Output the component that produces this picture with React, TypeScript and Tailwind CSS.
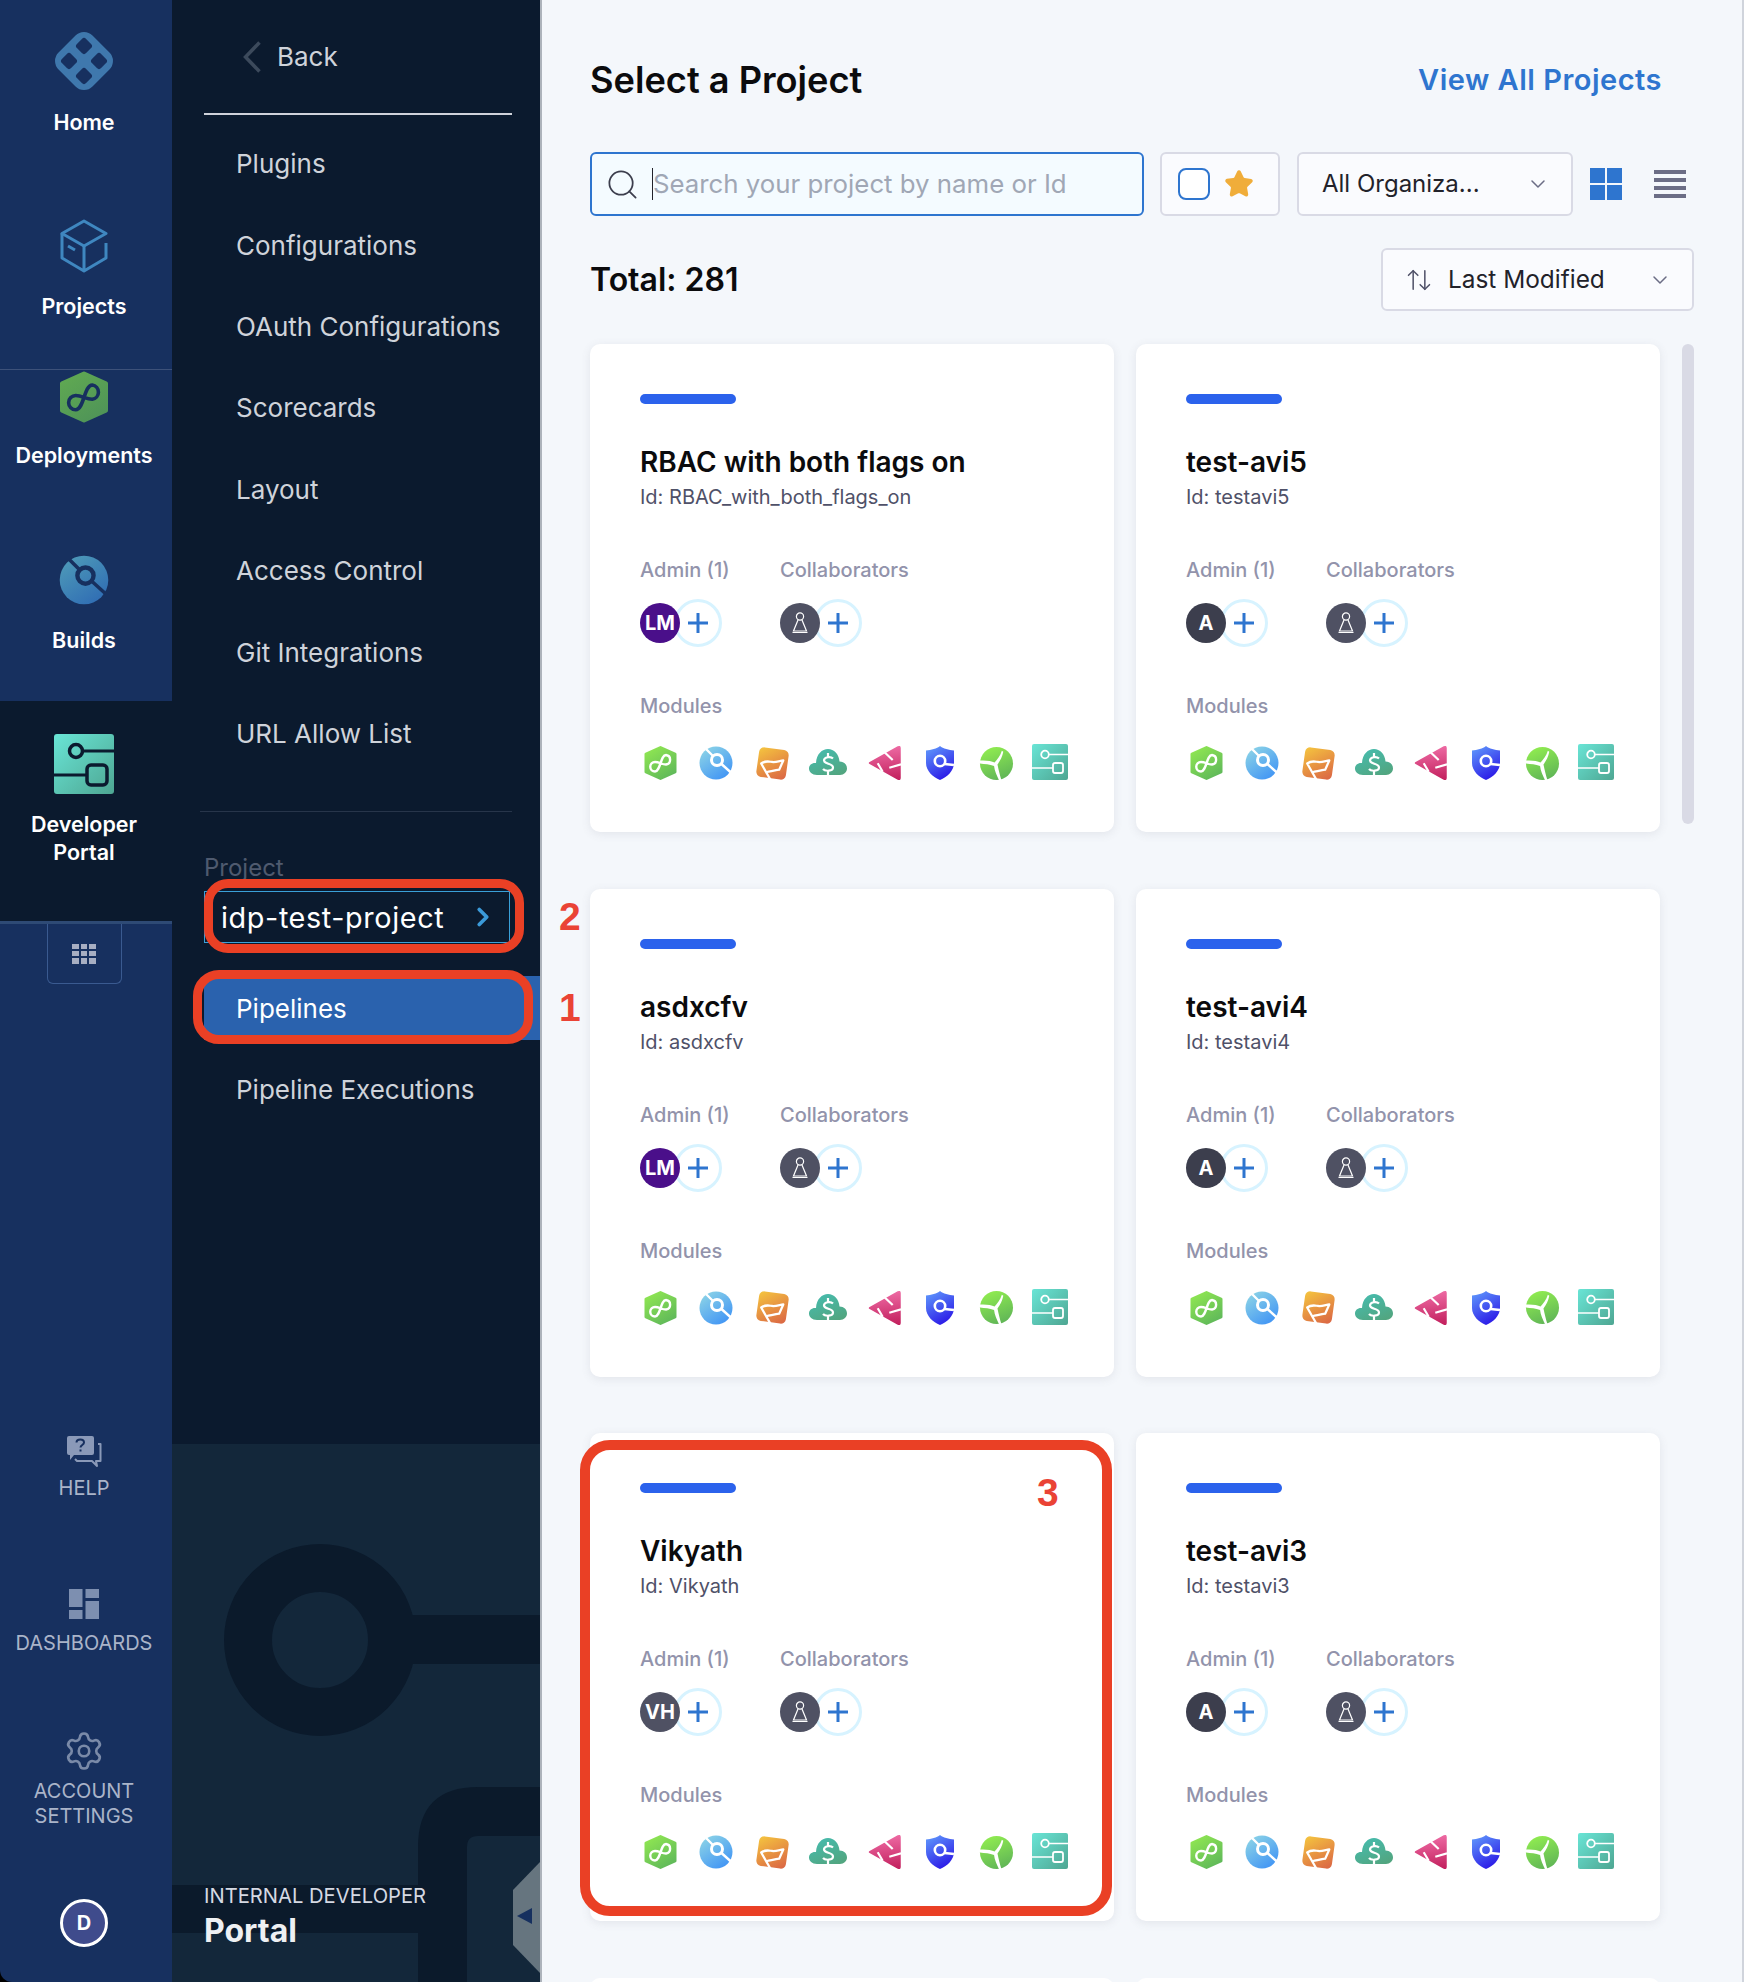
import { ChevronDown, ChevronRight, ArrowUpDown, Search, Settings, Star } from "lucide-react";

type IconProps = { className?: string };

const GradientDefs = () => (
  <svg width="0" height="0" className="absolute">
    <defs>
      <linearGradient id="gHex" x1="0.2" y1="0" x2="0.8" y2="1">
        <stop offset="0" stopColor="#8ee552" />
        <stop offset="1" stopColor="#5fb85a" />
      </linearGradient>
      <linearGradient id="gHexNav" x1="0.2" y1="0" x2="0.8" y2="1">
        <stop offset="0" stopColor="#5fa852" />
        <stop offset="1" stopColor="#4f9458" />
      </linearGradient>
      <linearGradient id="gCi" x1="0.1" y1="0" x2="0.8" y2="1">
        <stop offset="0" stopColor="#8fd6e6" />
        <stop offset="1" stopColor="#3f93f5" />
      </linearGradient>
      <linearGradient id="gCiNav" x1="0.1" y1="0" x2="0.8" y2="1">
        <stop offset="0" stopColor="#4f9cb8" />
        <stop offset="1" stopColor="#2f6cb4" />
      </linearGradient>
      <linearGradient id="gFlag" x1="0.1" y1="0" x2="0.8" y2="1">
        <stop offset="0" stopColor="#f4c23f" />
        <stop offset="1" stopColor="#dc6b44" />
      </linearGradient>
      <linearGradient id="gCloud" x1="0.2" y1="0" x2="0.8" y2="1">
        <stop offset="0" stopColor="#46bcae" />
        <stop offset="1" stopColor="#52a57f" />
      </linearGradient>
      <linearGradient id="gTri" x1="0.5" y1="0" x2="0.6" y2="1">
        <stop offset="0" stopColor="#ee6ba4" />
        <stop offset="1" stopColor="#c42360" />
      </linearGradient>
      <linearGradient id="gShield" x1="0.2" y1="0" x2="0.7" y2="1">
        <stop offset="0" stopColor="#5d94fb" />
        <stop offset="1" stopColor="#2a15e6" />
      </linearGradient>
      <linearGradient id="gTurbine" x1="0.3" y1="0" x2="0.7" y2="1">
        <stop offset="0" stopColor="#90ec50" />
        <stop offset="1" stopColor="#5fb457" />
      </linearGradient>
      <linearGradient id="gIdp" x1="0" y1="0" x2="1" y2="1">
        <stop offset="0" stopColor="#69e5d6" />
        <stop offset="1" stopColor="#4ea692" />
      </linearGradient>
    </defs>
  </svg>
);

const HexIcon = ({ className, fill = "url(#gHex)", line = "#fff" }: IconProps & { fill?: string; line?: string }) => (
  <svg viewBox="1.5 1 33 36" className={className}>
    <path d="M18 3.5 L32.5 10 V28 L18 34.5 L3.5 28 V10 Z" fill={fill} stroke={fill} strokeWidth="3" strokeLinejoin="round" />
    <path d="M12.5 18 C17 18 19 20.5 23.5 20.5 A4.8 4.8 0 0 0 23.5 11 C18 11 18 27.5 12.5 27.5 A4.75 4.75 0 0 1 12.5 18Z" fill="none" stroke={line} strokeWidth="2.4" />
  </svg>
);

const CiIcon = ({ className, fill = "url(#gCi)", line = "#fff" }: IconProps & { fill?: string; line?: string }) => (
  <svg viewBox="1 1 34 34" className={className}>
    <circle cx="18" cy="18" r="16.5" fill={fill} />
    <circle cx="19" cy="15" r="5.5" fill="none" stroke={line} strokeWidth="3" />
    <path d="M8 4 L15 11 M23.5 19 L34 28.5" stroke={line} strokeWidth="2.4" />
  </svg>
);

const FlagIcon = ({ className }: IconProps) => (
  <svg viewBox="0 0 36 36" className={className}>
    <rect x="3.5" y="3.5" width="29" height="29" rx="5" fill="url(#gFlag)" transform="rotate(8 18 18)" />
    <path d="M17 35.5 L7 18 C11 15 14 16 17.5 16.5 C21 17 25 15.5 28.5 15 L24.5 24 C21 24.5 17 25.5 12 26.5" fill="none" stroke="#fff" strokeWidth="2.2" strokeLinejoin="round" />
  </svg>
);

const CloudIcon = ({ className }: IconProps) => (
  <svg viewBox="0 0 38 34" className={className}>
    <path d="M8 29 C3 29 0 26 0 22.5 C0 19 3 16.5 7 17 C7.5 8 13 3 19 3 C25 3 30 8 30.5 15.5 C35 15.5 38 18.5 38 22.5 C38 26 35 29 31 29 Z" fill="url(#gCloud)" />
    <path d="M24 12.5 C22 10.5 15 10.5 15 14.5 C15 18.5 24 17 24 21.5 C24 25.5 16 25.5 14 23 M19 7 V10.5 M19 25 V33" fill="none" stroke="#fff" strokeWidth="2.2" />
  </svg>
);

const TriangleIcon = ({ className }: IconProps) => (
  <svg viewBox="0 0 34 38" className={className}>
    <path d="M2.5 19 L31 3 Q33 2 33 4 V34 Q33 36 31 35 Z" fill="url(#gTri)" stroke="url(#gTri)" strokeWidth="1.5" strokeLinejoin="round" />
    <path d="M17 7.7 L25.7 16 M22.3 23.7 L34 20.3 M10.7 19.3 L15.7 27.7" stroke="#fff" strokeWidth="2.2" />
  </svg>
);

const ShieldIcon = ({ className }: IconProps) => (
  <svg viewBox="0 0 30 36" className={className}>
    <path d="M15 1 C18 3.5 24 5 29 5.5 V18 C29 26 22 32 15 35 C8 32 1 26 1 18 V5.5 C6 5 12 3.5 15 1Z" fill="url(#gShield)" />
    <circle cx="15" cy="16" r="5.2" fill="none" stroke="#fff" strokeWidth="2.6" />
    <path d="M19.5 19 L29 20" stroke="#fff" strokeWidth="2.4" />
  </svg>
);

const TurbineIcon = ({ className }: IconProps) => (
  <svg viewBox="0 0 36 36" className={className}>
    <circle cx="18" cy="18" r="17" fill="url(#gTurbine)" />
    <path d="M1 15 C7 14.5 13 15.5 16 17 C19 14 22 10 23.5 5 L25 6 C24 11 22 15 19 19 C20 24 21.5 30 23 35 L21 36 C18 30 16 25 15.5 20.5 C11 19 6 18.5 1 18Z" fill="#fff" />
  </svg>
);

const IdpIcon = ({ className }: IconProps) => (
  <svg viewBox="0 0 36 36" className={className}>
    <rect width="36" height="36" rx="2" fill="url(#gIdp)" />
    <circle cx="13" cy="10.5" r="3.8" fill="none" stroke="#fff" strokeWidth="1.8" />
    <path d="M17 10.5 H36 M0 24 H21" stroke="#fff" strokeWidth="1.6" />
    <rect x="21" y="19" width="10" height="10" rx="2" fill="none" stroke="#fff" strokeWidth="1.8" />
  </svg>
);

const IdpNavIcon = ({ className }: IconProps) => (
  <svg viewBox="0 0 60 60" className={className}>
    <rect width="60" height="60" rx="3" fill="url(#gIdp)" />
    <circle cx="22" cy="17" r="6.5" fill="none" stroke="#0b1a2e" strokeWidth="3.5" />
    <path d="M28 17 H60 M0 41 H33" stroke="#0b1a2e" strokeWidth="3" />
    <rect x="33" y="31" width="20" height="20" rx="4" fill="none" stroke="#0b1a2e" strokeWidth="3.5" />
  </svg>
);

const HomeLogo = ({ className }: IconProps) => (
  <svg viewBox="0 0 60 60" className={className}>
    <rect x="6" y="6" width="48" height="48" rx="12" transform="rotate(45 30 30)" fill="#3f78ad" />
    <g fill="#17305f">
      <rect x="23.5" y="8.5" width="13" height="13" rx="3" transform="rotate(45 30 15)" />
      <rect x="38.5" y="23.5" width="13" height="13" rx="3" transform="rotate(45 45 30)" />
      <rect x="23.5" y="38.5" width="13" height="13" rx="3" transform="rotate(45 30 45)" />
      <rect x="8.5" y="23.5" width="13" height="13" rx="3" transform="rotate(45 15 30)" />
    </g>
  </svg>
);

const CubeIcon = ({ className }: IconProps) => (
  <svg viewBox="0 0 48 54" className={className} fill="none" stroke="#3f87c0" strokeWidth="3" strokeLinejoin="round">
    <path d="M24 2 L46 14.5 L24 27 L2 14.5 Z" />
    <path d="M2 14.5 V39 L24 52 L46 39 V24 M24 27 V52" />
    <path d="M8 27 L15 31" />
  </svg>
);

const HelpIcon = ({ className }: IconProps) => (
  <svg viewBox="0 0 36 32" className={className}>
    <path d="M3 0 H26 Q28 0 28 2 V17 Q28 19 26 19 H8 L4 24 V19 H3 Q1 19 1 17 V2 Q1 0 3 0Z" fill="#8a99b8" />
    <path d="M10.5 6.5 C10.5 2.5 18 2.5 18 6.5 C18 9 14.5 9 14.5 11.5 M14.5 13.5 V15.5" fill="none" stroke="#17305f" strokeWidth="2" />
    <path d="M32 8 H34.5 V25 H30 L31 30 L26 25 H11 L9 23" fill="none" stroke="#8a99b8" strokeWidth="2" strokeLinejoin="round" />
  </svg>
);

const DashIcon = ({ className }: IconProps) => (
  <svg viewBox="0 0 30 30" className={className} fill="#7d8fb0">
    <rect x="0" y="0" width="13.5" height="18" />
    <rect x="16.5" y="0" width="13.5" height="9" />
    <rect x="0" y="21" width="13.5" height="9" />
    <rect x="16.5" y="12" width="13.5" height="18" />
  </svg>
);

const PersonIcon = ({ className }: IconProps) => (
  <svg viewBox="0 0 20 24" className={className} fill="none" stroke="#fff" strokeWidth="1.2">
    <circle cx="10" cy="5.5" r="3.6" />
    <path d="M8 9 L3.5 20 H16.5 L12 9 M2.5 21.5 H17.5" />
  </svg>
);

const PlusBubble = ({ avatar, color, text }: { avatar?: boolean; color: string; text?: string }) => (
  <div className="relative h-[48px] w-[82px]">
    <div className="absolute left-[34px] top-0 flex h-[48px] w-[48px] items-center justify-center rounded-full border-[3px] border-[#d7f3ff] bg-white">
      <svg viewBox="0 0 20 20" className="h-[20px] w-[20px]" stroke="#2e75cf" strokeWidth="3">
        <path d="M10 0 V20 M0 10 H20" />
      </svg>
    </div>
    <div className={`absolute left-0 top-[4px] flex h-[40px] w-[40px] items-center justify-center rounded-full text-[20px] font-bold leading-none text-white ${color}`}>
      {avatar ? <PersonIcon className="h-[24px] w-[20px]" /> : text}
    </div>
  </div>
);

const ModuleRow = () => (
  <div className="-ml-[8px] flex h-[40px] items-center">
    <div className="flex w-[56px] justify-center"><HexIcon className="h-[36px] w-[33px]" /></div>
    <div className="flex w-[56px] justify-center"><CiIcon className="h-[34px] w-[34px]" /></div>
    <div className="flex w-[56px] justify-center"><FlagIcon className="h-[37px] w-[37px]" /></div>
    <div className="flex w-[56px] justify-center"><CloudIcon className="h-[34px] w-[38px]" /></div>
    <div className="flex w-[56px] justify-center"><TriangleIcon className="h-[38px] w-[34px]" /></div>
    <div className="flex w-[56px] justify-center"><ShieldIcon className="h-[36px] w-[30px]" /></div>
    <div className="flex w-[56px] justify-center"><TurbineIcon className="h-[35px] w-[35px]" /></div>
    <div className="-ml-[2px] -mt-[2px] flex w-[56px] justify-center"><IdpIcon className="h-[36px] w-[36px]" /></div>
  </div>
);

type Project = { name: string; id: string; initials: string; color: string; highlight?: boolean };

const projects: Project[] = [
  { name: "RBAC with both flags on", id: "RBAC_with_both_flags_on", initials: "LM", color: "bg-[#4a0f8a]" },
  { name: "test-avi5", id: "testavi5", initials: "A", color: "bg-[#3c3e4d]" },
  { name: "asdxcfv", id: "asdxcfv", initials: "LM", color: "bg-[#4a0f8a]" },
  { name: "test-avi4", id: "testavi4", initials: "A", color: "bg-[#3c3e4d]" },
  { name: "Vikyath", id: "Vikyath", initials: "VH", color: "bg-[#4f5163]", highlight: true },
  { name: "test-avi3", id: "testavi3", initials: "A", color: "bg-[#3c3e4d]" },
];

const ProjectCard = ({ project }: { project: Project }) => (
  <div className="relative h-[488px] rounded-[10px] bg-white pl-[50px] pt-[50px] shadow-[0_2px_10px_rgba(96,97,112,0.12)]">
    <div className="h-[10px] w-[96px] rounded-full bg-[#2b62ec]" />
    <div className="mt-[40px] text-[28px] font-semibold leading-[36px] text-[#0b0b0d]">{project.name}</div>
    <div className="mt-[2px] text-[20px] leading-[30px] text-[#4f5168]">Id: {project.id}</div>
    <div className="mt-[43px] flex">
      <div className="w-[140px]">
        <div className="text-[20px] font-medium leading-[30px] text-[#9293ab]">Admin (1)</div>
        <div className="mt-[14px]"><PlusBubble color={project.color} text={project.initials} /></div>
      </div>
      <div>
        <div className="text-[20px] font-medium leading-[30px] text-[#9293ab]">Collaborators</div>
        <div className="mt-[14px]"><PlusBubble avatar color="bg-[#4f5163]" /></div>
      </div>
    </div>
    <div className="mt-[44px] text-[20px] font-medium leading-[30px] text-[#9293ab]">Modules</div>
    <div className="mt-[22px]"><ModuleRow /></div>
    {project.highlight && (
      <>
        <div className="pointer-events-none absolute -left-[10px] bottom-[5px] right-[2px] top-[7px] rounded-[30px] border-[10px] border-[#ea4025]" />
        <div className="absolute left-[447px] top-[38px] [font-family:'Liberation_Sans',sans-serif] text-[39px] font-bold leading-[44px] text-[#ea4335]">3</div>
      </>
    )}
  </div>
);

const Rail = () => (
  <aside className="flex h-full w-[172px] shrink-0 flex-col overflow-hidden rounded-bl-[12px] bg-[#17305f] text-center text-[21.5px] font-semibold leading-[28px] text-white">
    <div className="h-[370px] border-b border-[#3d5179] pr-[4px] pt-[31px]">
      <HomeLogo className="mx-auto h-[60px] w-[60px]" />
      <div className="mt-[17px]">Home</div>
      <CubeIcon className="mx-auto mt-[83px] h-[54px] w-[48px]" />
      <div className="mt-[19px]">Projects</div>
    </div>
    <div className="pr-[4px]">
      <HexIcon className="mx-auto h-[54px] w-[50px]" fill="url(#gHexNav)" line="#17305f" />
      <div className="mt-[17px]">Deployments</div>
      <CiIcon className="mx-auto mt-[86px] h-[50px] w-[50px]" fill="url(#gCiNav)" line="#17305f" />
      <div className="mt-[21px]">Builds</div>
    </div>
    <div className="mt-[47px] h-[223px] shrink-0 border-b-[3px] border-[#2e4a75] bg-[#0b1a2e] pr-[4px] pt-[33px]">
      <IdpNavIcon className="mx-auto h-[60px] w-[60px]" />
      <div className="mt-[16px]">Developer</div>
      <div>Portal</div>
    </div>
    <div className="pr-[4px]">
      <div className="mx-auto flex h-[60px] w-[75px] shrink-0 items-center justify-center rounded-b-[6px] border border-t-0 border-[#3a5a90]">
        <div className="grid h-[20px] w-[24px] grid-cols-3 gap-[2px]">
          {Array.from({ length: 9 }).map((_, i) => (
            <div key={i} className="bg-[#a7aec2]" />
          ))}
        </div>
      </div>
    </div>
    <div className="mt-auto flex flex-col items-center pb-[35px] pr-[4px] text-[20px] font-normal leading-[25px] text-[#aab4c9]">
      <HelpIcon className="h-[32px] w-[36px]" />
      <div className="mt-[8px]">HELP</div>
      <DashIcon className="mt-[88px] h-[30px] w-[30px]" />
      <div className="mt-[12px]">DASHBOARDS</div>
      <Settings className="mt-[74px] h-[42px] w-[42px] text-[#7a8aa8]" strokeWidth={1.5} />
      <div className="mt-[7px]">ACCOUNT</div>
      <div>SETTINGS</div>
      <div className="mt-[70px] flex h-[48px] w-[48px] items-center justify-center rounded-full border-[3px] border-white bg-[#3f4b8c] text-[20px] font-bold text-white">D</div>
    </div>
  </aside>
);

const menuTop = ["Plugins", "Configurations", "OAuth Configurations", "Scorecards", "Layout", "Access Control", "Git Integrations", "URL Allow List"];

const SidePanel = () => (
  <div className="relative flex h-full w-[368px] shrink-0 flex-col overflow-hidden bg-[#0b1a2e] text-[26px] text-[#cfd3da]">
    <svg viewBox="0 0 368 538" className="absolute bottom-0 left-0 h-[538px] w-[368px]">
      <rect width="368" height="538" fill="#13273a" />
      <circle cx="148" cy="196" r="72" fill="none" stroke="#0b1a2b" strokeWidth="48" />
      <rect x="210" y="171" width="158" height="49" fill="#0b1a2b" />
      <rect x="0" y="441" width="270" height="48" fill="#0b1a2b" />
      <path d="M246 538 V403 Q246 343 306 343 H368 V392 H306 Q295 392 295 403 V538 Z" fill="#0b1a2b" />
    </svg>
    <div className="relative flex h-[113px] shrink-0 items-center pl-[71px]">
      <svg viewBox="0 0 18 32" className="mr-[16px] h-[32px] w-[18px]" fill="none" stroke="#3c4a5c" strokeWidth="3.5">
        <path d="M16.5 1.5 L2.5 16 L16.5 30.5" />
      </svg>
      Back
    </div>
    <div className="relative ml-[32px] h-[2px] w-[308px] shrink-0 bg-[#cfd2da]" />
    <div className="relative mt-[8px] shrink-0 pl-[64px]">
      {menuTop.map((item) => (
        <div key={item} className="flex h-[81.4px] items-center">{item}</div>
      ))}
    </div>
    <div className="relative ml-[28px] mt-[37px] h-px w-[312px] shrink-0 bg-[#27354a]" />
    <div className="relative ml-[32px] mt-[40px] shrink-0 text-[24px] leading-[32px] text-[#4f5a6f]">Project</div>
    <div className="relative ml-[32px] mt-[7px] flex h-[52px] w-[306px] shrink-0 items-center justify-between border border-[#3aa0d8] pl-[16px] pr-[11px] text-[28.8px] tracking-[0.6px] text-white">
      idp-test-project
      <ChevronRight className="h-[30px] w-[30px] text-[#3b9ad9]" strokeWidth={3} />
      <div className="absolute -left-[1px] -top-[13px] h-[74px] w-[320px] rounded-[24px] border-[9px] border-[#ea4025]" />
    </div>
    <div className="relative ml-[32px] mt-[33px] flex h-[64px] shrink-0 items-center bg-[#2a62ae] pl-[32px] text-white">
      Pipelines
      <div className="absolute -left-[11px] -top-[6px] h-[74px] w-[340px] rounded-[26px] border-[9px] border-[#ea4025]" />
    </div>
    <div className="relative mt-[9px] flex h-[81.4px] shrink-0 items-center pl-[64px]">Pipeline Executions</div>
    <div className="relative mt-auto pb-[31px] pl-[32px]">
      <div className="text-[20.2px] leading-[30px] text-[#d5d9e3]">INTERNAL DEVELOPER</div>
      <div className="text-[32px] font-bold leading-[40px] text-[#eef0f3]">Portal</div>
    </div>
    <svg viewBox="0 0 27 111" className="absolute bottom-[9px] right-0 h-[111px] w-[27px]">
      <path d="M27 0 L0 28 V83 L27 111 Z" fill="#66757f" />
      <path d="M4 54 L19 46 V62 Z" fill="#16305f" />
    </svg>
  </div>
);

const MainPanel = () => (
  <main className="relative h-full min-w-0 flex-1 overflow-hidden border-l-2 border-r-2 border-l-[#adb3bb] border-r-[#d0d4dc] bg-[#f4f7fb] pl-[48px]">
    <div className="flex h-[152px] items-start justify-between pr-[80px] pt-[56px]">
      <h1 className="text-[36.2px] font-semibold leading-[48px] text-[#0b0b0d]">Select a Project</h1>
      <a className="text-[29px] font-semibold leading-[48px] tracking-[0.5px] text-[#2e75cf]">View All Projects</a>
    </div>
    <div className="flex h-[64px] items-center">
      <div className="flex h-[64px] w-[554px] items-center rounded-[6px] border-2 border-[#2e75cf] bg-[#f4fbff] pl-[13px]">
        <Search className="h-[35px] w-[35px] text-[#3c3e4d]" strokeWidth={1.2} />
        <div className="ml-[12px] h-[32px] w-px bg-[#22222a]" />
        <div className="text-[25.8px] text-[#a0a7b5]">Search your project by name or Id</div>
      </div>
      <div className="ml-[16px] flex h-[64px] w-[120px] items-center rounded-[6px] border-2 border-[#d9dae5] bg-[#fafbfe] pl-[16px]">
        <div className="h-[32px] w-[32px] rounded-[8px] border-2 border-[#2e75cf] bg-white" />
        <Star className="ml-[14px] h-[30px] w-[30px] fill-[#f0ad3a] text-[#f0ad3a]" />
      </div>
      <div className="ml-[17px] flex h-[64px] w-[276px] items-center justify-between rounded-[6px] border-2 border-[#d9dae5] bg-[#fafbfe] pl-[23px] pr-[21px] text-[24px] text-[#22222a]">
        All Organiza...
        <ChevronDown className="h-[24px] w-[24px] text-[#6b6d85]" strokeWidth={1.5} />
      </div>
      <div className="ml-[17px] grid h-[32px] w-[32px] grid-cols-2 gap-[2px]">
        <div className="bg-[#2e75cf]" />
        <div className="bg-[#2e75cf]" />
        <div className="bg-[#2e75cf]" />
        <div className="bg-[#2e75cf]" />
      </div>
      <div className="ml-[32px] flex h-[28px] w-[32px] flex-col justify-between">
        <div className="h-[4px] bg-[#6b6d85]" />
        <div className="h-[4px] bg-[#6b6d85]" />
        <div className="h-[4px] bg-[#6b6d85]" />
        <div className="h-[4px] bg-[#6b6d85]" />
      </div>
    </div>
    <div className="mt-[32px] flex h-[63px] items-center justify-between pr-[48px]">
      <div className="text-[32px] font-semibold text-[#0b0b0d]">Total: 281</div>
      <div className="flex h-[63px] w-[313px] items-center rounded-[6px] border-2 border-[#d9dae5] bg-[#fafbfe] pl-[22px] pr-[20px] text-[24.4px] text-[#22222a]">
        <ArrowUpDown className="h-[28px] w-[28px] text-[#4f5168]" strokeWidth={1.3} />
        <span className="ml-[15px] flex-1">Last Modified</span>
        <ChevronDown className="h-[24px] w-[24px] text-[#6b6d85]" strokeWidth={1.5} />
      </div>
    </div>
    <div className="mt-[33px] grid grid-cols-[524px_524px] gap-x-[22px] gap-y-[56.5px]">
      {projects.map((p) => (
        <ProjectCard key={p.name} project={p} />
      ))}
      <div className="h-[488px] rounded-[10px] bg-white" />
      <div className="h-[488px] rounded-[10px] bg-white" />
    </div>
    <div className="absolute left-[1140px] top-[344px] h-[480px] w-[12px] rounded-full bg-[#d9dae5]" />
    <div className="absolute left-[17px] top-[897px] [font-family:'Liberation_Sans',sans-serif] text-[39px] font-bold leading-[40px] text-[#ea4335]">2</div>
    <div className="absolute left-[17px] top-[988px] [font-family:'Liberation_Sans',sans-serif] text-[39px] font-bold leading-[40px] text-[#ea4335]">1</div>
  </main>
);

export default function App() {
  return (
    <div className="flex h-[1982px] w-[1744px] overflow-hidden bg-black [font-family:Inter,sans-serif]">
      <GradientDefs />
      <Rail />
      <SidePanel />
      <MainPanel />
    </div>
  );
}
